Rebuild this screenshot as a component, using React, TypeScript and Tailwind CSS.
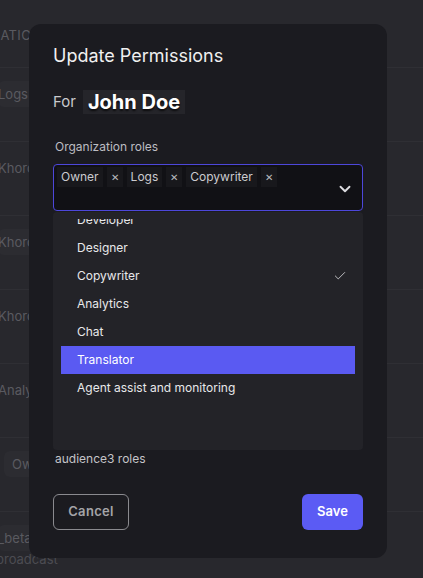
import { ChevronDown, Check } from 'lucide-react';

const bgRows = [
  { label: 'Logs', chip: true },
  { label: 'Khoro', chip: false },
  { label: 'Khoro', chip: true },
  { label: 'Khoro', chip: false },
  { label: 'Analy', chip: false },
  { label: 'Owr', chip: true },
  { label: '_beta', chip: true },
];

const roles = ['Developer', 'Designer', 'Copywriter', 'Analytics', 'Chat', 'Translator', 'Agent assist and monitoring'];
const selected = ['Owner', 'Logs', 'Copywriter'];

export default function App() {
  return (
    <div className="relative w-[423px] h-[578px] overflow-hidden bg-[#28282d] font-['Inter',sans-serif]">
      {/* dimmed page behind the dialog */}
      <div className="flex flex-col text-[13px] leading-[18px] text-[#5a5a60]">
        <div className="h-[68px] border-b border-[#2f2f34] flex items-start pt-[26px] tracking-wide whitespace-nowrap">
          <span className="-ml-[60px]">ORGANIZATION</span>
        </div>
        {bgRows.map((row, i) => (
          <div key={i} className="h-[74px] border-b border-[#2f2f34] flex items-start pt-[13px] whitespace-nowrap">
            <span className={`${row.chip ? 'bg-[#2c2c31] rounded-md py-[4px]' : 'py-[4px]'} ${row.label === 'Owr' ? 'ml-[4px] px-2' : '-ml-[2px] pr-2'}`}>
              {row.label}
            </span>
          </div>
        ))}
        <div className="-mt-[36px] -ml-[4px] text-[#4c4c52] whitespace-nowrap">broadcast</div>
      </div>

      {/* dialog */}
      <div className="absolute left-[29px] top-[24px] w-[358px] h-[534px] rounded-xl bg-[#1b1b20] px-6 pt-5 flex flex-col">
        <h2 className="text-[18px] leading-6 text-[#f0f0f0]">Update Permissions</h2>

        <div className="mt-5 h-7 flex items-center gap-[7px]">
          <span className="text-[15px] text-[#c9c9cc]">For</span>
          <span className="bg-[#25252a] px-[5px] h-6 flex items-center text-[20px] font-bold text-white [text-shadow:0_2px_2px_rgba(0,0,0,0.7)]">
            John Doe
          </span>
        </div>

        <div className="mt-[22px] px-0.5 text-[12px] leading-[18px] text-[#bdbdc2]">Organization roles</div>

        <div className="mt-2 h-[47px] rounded border-[1.5px] border-[#4d47da] bg-[#111115] flex items-start justify-between pl-[3px] pr-2 pt-[2px]">
          <div className="flex items-center gap-1 text-[12px] text-[#cbcbcf]">
            {selected.map((s) => (
              <div key={s} className="flex items-center gap-1">
                <span className="bg-[#18181c] px-1 leading-5">{s}</span>
                <span className="bg-[#18181c] px-1 leading-5 text-[10px] text-[#bbbbbf]">✕</span>
              </div>
            ))}
          </div>
          <ChevronDown size={18} strokeWidth={2.5} className="self-center text-[#dcdce0]" />
        </div>

        <div className="mt-px h-[238px] rounded-sm bg-[#232328] px-2 pt-[7px]">
          <div className="h-[231px] overflow-hidden">
            <div className="-mt-[13px] flex flex-col text-[12px] text-[#e8e8ea]">
              {roles.map((r) => (
                <div
                  key={r}
                  className={`h-7 shrink-0 flex items-center justify-between pl-4 pr-2 ${r === 'Translator' ? 'bg-[#5a5af2] text-white' : ''}`}
                >
                  <span>{r}</span>
                  {r === 'Copywriter' && <Check size={14} strokeWidth={1.5} className="text-[#d0d0d4]" />}
                </div>
              ))}
            </div>
          </div>
        </div>

        <div className="px-0.5 text-[12px] leading-[18px] text-[#c4c4c8]">audience3 roles</div>

        <div className="mt-[26px] flex items-center justify-between">
          <button className="w-[76px] h-9 rounded-md border border-[#8a8a8f] text-[13px] font-semibold tracking-wide text-[#a4a4a8]">
            Cancel
          </button>
          <button className="w-[61px] h-9 rounded-md bg-[#5b5bf4] text-[13px] font-semibold text-white">
            Save
          </button>
        </div>
      </div>
    </div>
  );
}
